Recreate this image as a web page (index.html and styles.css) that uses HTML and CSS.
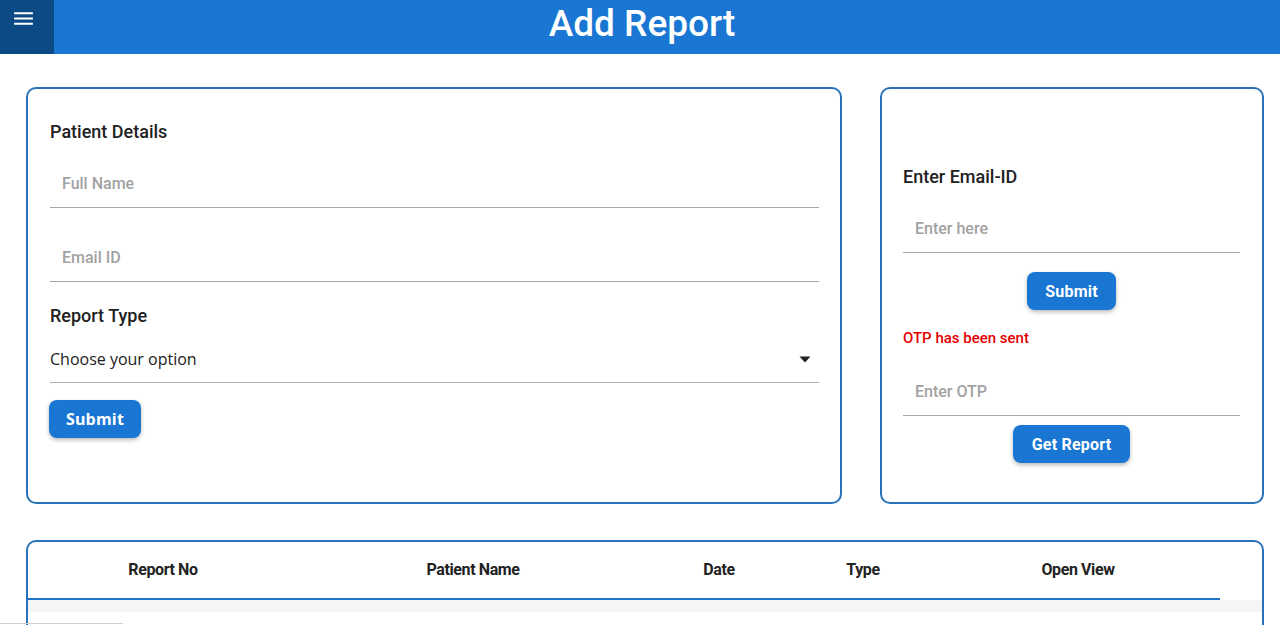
FILE: index.html
```html
<!DOCTYPE html>
<html lang="en">
<head>
<meta charset="utf-8">
<title>Add Report</title>
<link rel="stylesheet" href="styles.css">
</head>
<body>
<header class="topbar">
  <button class="menu-btn" aria-label="Menu">
    <svg viewBox="0 0 24 24" width="25" height="25"><path fill="#fff" d="M3 18h18v-2H3v2zm0-5h18v-2H3v2zm0-7v2h18V6H3z"/></svg>
  </button>
  <h1 class="title">Add Report</h1>
</header>

<main class="page">
  <div class="row">
    <section class="card card-left">
      <h2 class="label lbl-patient">Patient Details</h2>
      <input class="field field-name" type="text" placeholder="Full Name">
      <input class="field field-email" type="text" placeholder="Email ID">
      <h2 class="label lbl-type">Report Type</h2>
      <div class="select">
        <span>Choose your option</span>
        <svg class="caret" viewBox="0 0 12 7" width="12" height="7"><path d="M0.5 0.5h11L6 6.5z" fill="#222"/></svg>
      </div>
      <button class="btn btn-segoe">Submit</button>
    </section>

    <section class="card card-right">
      <h2 class="label lbl-email">Enter Email-ID</h2>
      <input class="field field-r1" type="text" placeholder="Enter here">
      <div class="center"><button class="btn btn-roboto btn-submit2">Submit</button></div>
      <p class="otp-msg">OTP has been sent</p>
      <input class="field field-r2" type="text" placeholder="Enter OTP">
      <div class="center"><button class="btn btn-roboto btn-get">Get Report</button></div>
    </section>
  </div>

  <section class="card table-card">
    <div class="thead">
      <div class="th">Report No</div>
      <div class="th">Patient Name</div>
      <div class="th">Date</div>
      <div class="th">Type</div>
      <div class="th">Open View</div>
    </div>
    <div class="tbody-strip"></div>
  </section>
</main>
<div class="status-line"></div>
</body>
</html>
```

FILE: styles.css
```css
* { box-sizing: border-box; }
html, body { margin: 0; padding: 0; background: #fff; }
body { font-family: Roboto, "Noto Sans", Arial, sans-serif; color: #212121; overflow: hidden; height: 625px; }

.topbar {
  height: 54px;
  background: #1976d2;
  display: flex;
  align-items: flex-start;
}
.menu-btn {
  width: 54px;
  height: 54px;
  background: #0c4a86;
  border: none;
  padding: 6px 0 0 11px;
  display: flex;
  align-items: flex-start;
  justify-content: flex-start;
  cursor: pointer;
}
.title {
  flex: 1;
  margin: 0;
  text-align: center;
  color: #fff;
  font-size: 37px;
  font-weight: 500;
  line-height: 47px;
  padding-right: 50px;
  padding-left: 0;
}

.page { padding: 33px 16px 0 26px; }
.row { display: flex; gap: 38px; align-items: stretch; }

.card {
  border: 2px solid #2a72b8;
  border-radius: 10px;
  background: #fff;
}
.card-left { width: 816px; height: 417px; padding: 31px 21px 0 22px; }
.card-right { width: 384px; height: 417px; padding: 76px 22px 0 21px; }

.label {
  margin: 0;
  font-size: 18px;
  font-weight: 500;
  line-height: 24px;
  color: #212121;
}
.field {
  display: block;
  width: 100%;
  height: 49px;
  border: none;
  border-bottom: 1px solid #a8a8a8;
  padding: 0 12px;
  font-family: Roboto, Arial, sans-serif;
  font-size: 16px;
  font-weight: 500;
  color: #212121;
  outline: none;
  background: transparent;
}
.field::placeholder { color: #a2a2a2; }
.field-name { margin-top: 15px; }
.field-email { margin-top: 25px; }
.lbl-type { margin-top: 22px; }

.select {
  margin-top: 8px;
  height: 47px;
  border-bottom: 1px solid #b0b0b0;
  display: flex;
  align-items: center;
  justify-content: space-between;
  font-family: "Open Sans", "Noto Sans", sans-serif;
  font-size: 16px;
  color: #212121;
  padding-right: 8px;
}
.caret { display: block; }

.btn {
  background: #1976d2;
  color: #fff;
  border: none;
  border-radius: 8px;
  height: 38px;
  box-shadow: 0 2px 4px rgba(0,0,0,0.28);
  cursor: pointer;
  display: block;
}
.btn-segoe {
  margin-top: 17px;
  margin-left: -1px;
  width: 92px;
  font-family: "Open Sans", "Noto Sans", sans-serif;
  font-weight: 700;
  font-size: 16px;
  letter-spacing: 0.2px;
}
.btn-roboto {
  font-family: Roboto, Arial, sans-serif;
  font-weight: 700;
  font-size: 16px;
  letter-spacing: 0.2px;
}
.center { display: flex; justify-content: center; }
.btn-submit2 { width: 89px; margin-top: 19px; }
.btn-get { width: 117px; margin-top: 9px; }

.field-r1 { margin-top: 15px; }
.otp-msg {
  margin: 18px 0 0;
  color: #e60000;
  font-size: 15px;
  font-weight: 500;
  line-height: 20px;
}
.field-r2 { margin-top: 19px; }

.table-card {
  margin-top: 36px;
  height: 86px;
  border-bottom: none;
  border-radius: 10px 10px 0 0;
}
.thead {
  display: grid;
  grid-template-columns: 270px 350px 142px 146px 284px;
  height: 58px;
  width: 1192px;
  border-bottom: 2px solid #1f74c8;
  align-items: center;
  padding-bottom: 1px;
}
.th {
  text-align: center;
  font-size: 16px;
  font-weight: 700;
  color: #222;
  letter-spacing: -0.4px;
}
.tbody-strip {
  height: 12px;
  background: #f5f5f5;
}
.status-line {
  position: fixed;
  left: 0;
  bottom: 1px;
  width: 123px;
  height: 1px;
  background: #d0d0d0;
}
```
